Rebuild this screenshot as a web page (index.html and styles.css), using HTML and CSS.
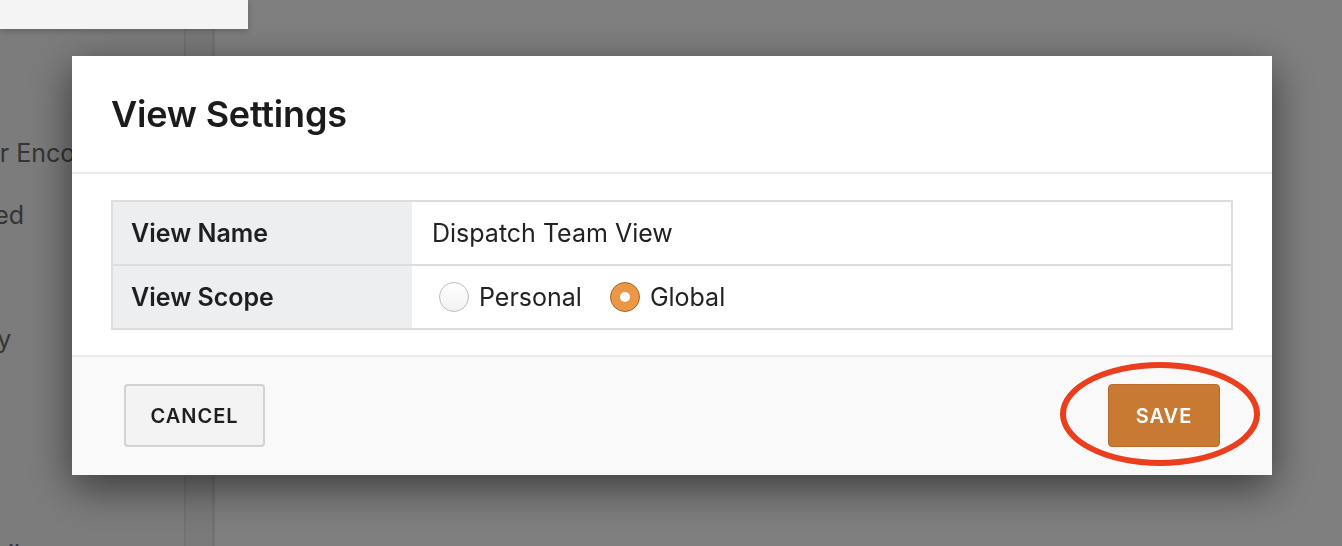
FILE: index.html
```html
<!DOCTYPE html>
<html>
<head>
<meta charset="utf-8">
<link rel="stylesheet" href="styles.css">
</head>
<body>
<div class="page">
  <div class="topcard"></div>
  <aside class="sidebar">
    <ul class="nav">
      <li class="nav-item i1">Filter Encounters</li>
      <li class="nav-item i2">Saved</li>
      <li class="nav-item i3">Daily</li>
      <li class="nav-item i4">Details</li>
    </ul>
  </aside>
  <div class="strip"></div>
  <main class="main"></main>
</div>
<div class="overlay"></div>
<div class="modal">
  <div class="modal-header">
    <h1 class="modal-title">View Settings</h1>
  </div>
  <div class="modal-body">
    <div class="form-table">
      <div class="row">
        <div class="label">View Name</div>
        <div class="value">Dispatch Team View</div>
      </div>
      <div class="row">
        <div class="label">View Scope</div>
        <div class="value radios">
          <label class="radio"><span class="dot"></span>Personal</label>
          <label class="radio"><span class="dot checked"></span>Global</label>
        </div>
      </div>
    </div>
  </div>
  <div class="modal-footer">
    <button class="btn btn-cancel">CANCEL</button>
    <div class="save-wrap">
      <button class="btn btn-save">SAVE</button>
      <span class="ring"></span>
    </div>
  </div>
</div>
</body>
</html>
```
FILE: styles.css
```css
* { box-sizing: border-box; }
html, body { margin: 0; padding: 0; height: 100%; }
body {
  font-family: Inter, "Noto Sans", "Liberation Sans", sans-serif;
  background: #ffffff;
  overflow: hidden;
  width: 1342px;
  height: 546px;
}
.page {
  display: flex;
  height: 546px;
  position: relative;
}
.topcard {
  position: absolute;
  left: 0;
  top: 0;
  width: 248px;
  height: 29px;
  background: #f4f4f4;
  box-shadow: 0 2px 6px rgba(0,0,0,0.22);
  z-index: 2;
}
.sidebar {
  width: 186px;
  border-right: 2px solid #e4e4e4;
  background: #f8f8f8;
  overflow: hidden;
}
.nav {
  list-style: none;
  margin: 0 0 0 -47px;
  padding: 138px 0 0 0;
  white-space: nowrap;
}
.nav-item {
  font-size: 25px;
  line-height: 30px;
  height: 62px;
  color: #6a6a6a;
}
.nav-item.i1 { text-indent: -3px; }
.nav-item.i2 { text-indent: -2px; }
.nav-item.i3 { margin-top: 62px; }
.nav-item.i4 { margin-top: 153px; }
.strip {
  width: 29px;
  background: #f5f5f5;
  border-right: 3px solid #e6e6e6;
}
.main { flex: 1; background: #ffffff; }
.overlay {
  position: fixed;
  inset: 0;
  background: rgba(0,0,0,0.5);
}
.modal {
  position: fixed;
  left: 72px;
  top: 56px;
  width: 1200px;
  background: #ffffff;
  box-shadow: 0 12px 40px rgba(0,0,0,0.55);
  display: flex;
  flex-direction: column;
}
.modal-header {
  height: 118px;
  border-bottom: 2px solid #ebebeb;
  padding: 0 39px;
  display: flex;
  align-items: center;
}
.modal-title {
  margin: 0;
  font-size: 36px;
  font-weight: 600;
  color: #1b1b1b;
  letter-spacing: -0.2px;
}
.modal-body {
  padding: 26px 39px 25px;
}
.form-table {
  border: 2px solid #dddddd;
}
.row {
  display: flex;
  height: 62px;
}
.row + .row { border-top: 2px solid #dddddd; height: 64px; }
.label {
  width: 299px;
  background: #edeef0;
  font-size: 25px;
  font-weight: 600;
  color: #1f1f1f;
  padding-left: 18px;
  display: flex;
  align-items: center;
}
.value {
  flex: 1;
  font-size: 25px;
  color: #222;
  padding-left: 20px;
  display: flex;
  align-items: center;
}
.radios { padding-left: 27px; gap: 28px; }
.radio {
  display: flex;
  align-items: center;
  gap: 10px;
}
.dot {
  width: 30px;
  height: 30px;
  border-radius: 50%;
  border: 1.5px solid #bdbdbd;
  background: linear-gradient(#ffffff, #f1f1f1);
  position: relative;
}
.dot.checked {
  background: #ec9745;
  border-color: #a86528;
}
.dot.checked::after {
  content: "";
  position: absolute;
  left: 50%;
  top: 50%;
  width: 10px;
  height: 10px;
  margin: -5px 0 0 -5px;
  border-radius: 50%;
  background: #ffffff;
}
.modal-footer {
  border-top: 2px solid #ebebeb;
  background: #f9f9f9;
  padding: 27px 52px 28px;
  display: flex;
  justify-content: space-between;
  align-items: center;
}
.btn {
  font-family: Inter, "Noto Sans", "Liberation Sans", sans-serif;
  font-size: 20px;
  font-weight: 600;
  letter-spacing: 1px;
  height: 63px;
  border-radius: 4px;
  cursor: pointer;
}
.btn-cancel {
  width: 141px;
  background: #f3f3f3;
  border: 2px solid #d2d2d2;
  color: #1f1f1f;
}
.save-wrap { position: relative; }
.btn-save {
  width: 112px;
  background: #c97a32;
  border: 1px solid #b86d2b;
  color: #ffffff;
  display: block;
}
.ring {
  position: absolute;
  left: -48px;
  top: -22px;
  width: 200px;
  height: 104px;
  border: 6px solid #ea3e1f;
  border-radius: 50%;
  pointer-events: none;
}
```
